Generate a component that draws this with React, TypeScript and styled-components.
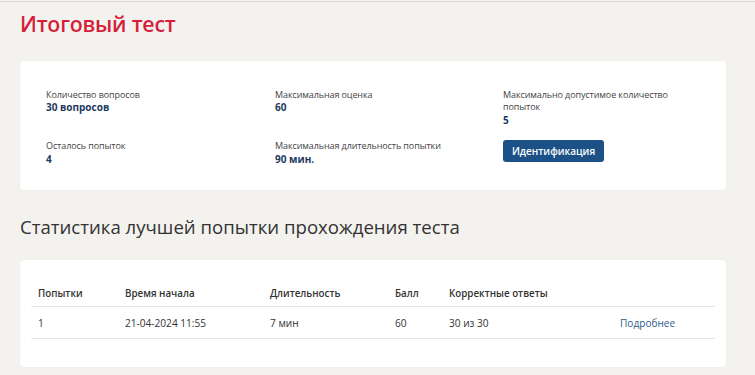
import styled, { createGlobalStyle } from "styled-components";

const GlobalStyle = createGlobalStyle`
  html, body {
    margin: 0;
    padding: 0;
    background: #f3f2ef;
  }
  body {
    font-family: "Open Sans", "Noto Sans", sans-serif;
    color: #333;
  }
`;

interface InfoItem {
  label: string;
  value: string;
  wrap?: boolean;
}

const infoRows: InfoItem[] = [
  { label: "Количество вопросов", value: "30 вопросов" },
  { label: "Максимальная оценка", value: "60" },
  { label: "Максимально допустимое количество попыток", value: "5", wrap: true },
  { label: "Осталось попыток", value: "4" },
  { label: "Максимальная длительность попытки", value: "90 мин." },
];

const columns = [
  { title: "Попытки", width: 87 },
  { title: "Время начала", width: 145 },
  { title: "Длительность", width: 125 },
  { title: "Балл", width: 54 },
  { title: "Корректные ответы", width: 171 },
  { title: "", width: 102 },
];

const attempts = [
  { n: "1", start: "21-04-2024 11:55", duration: "7 мин", score: "60", correct: "30 из 30" },
];

const App = () => {
  return (
    <>
      <GlobalStyle />
      <Page>
        <Title>Итоговый тест</Title>
        <Card $pad="28px 26px 24px">
          <InfoGrid>
            {infoRows.map((item) => (
              <InfoCell key={item.label}>
                <Label $wrap={item.wrap}>{item.label}</Label>
                <Value>{item.value}</Value>
              </InfoCell>
            ))}
            <InfoCell>
              <Button type="button">Идентификация</Button>
            </InfoCell>
          </InfoGrid>
        </Card>
        <Heading>Статистика лучшей попытки прохождения теста</Heading>
        <Card $pad="20px 11px 28px">
          <Table>
            <colgroup>
              {columns.map((c, i) => (
                <col key={i} style={{ width: c.width }} />
              ))}
            </colgroup>
            <thead>
              <tr>
                {columns.map((c, i) => (
                  <Th key={i}>{c.title}</Th>
                ))}
              </tr>
            </thead>
            <tbody>
              {attempts.map((a) => (
                <tr key={a.n}>
                  <Td>{a.n}</Td>
                  <Td>{a.start}</Td>
                  <Td>{a.duration}</Td>
                  <Td>{a.score}</Td>
                  <Td>{a.correct}</Td>
                  <Td>
                    <MoreLink href="#">Подробнее</MoreLink>
                  </Td>
                </tr>
              ))}
            </tbody>
          </Table>
        </Card>
      </Page>
    </>
  );
};

export default App;

const Page = styled.div`
  border-top: 1px solid #dcdad5;
  margin-top: 1px;
  padding: 0 29px 9px 20px;
`;

const Title = styled.h1`
  margin: 0;
  padding: 7px 0 0;
  height: 59px;
  box-sizing: border-box;
  font-size: 21.3px;
  line-height: 30px;
  font-weight: 600;
  color: #d51f3a;
  letter-spacing: -0.2px;
`;

const Card = styled.div<{ $pad: string }>`
  background: #fff;
  border-radius: 4px;
  box-shadow: 0 0 2px rgba(0, 0, 0, 0.06);
  padding: ${(p) => p.$pad};
`;

const InfoGrid = styled.div`
  display: grid;
  grid-template-columns: 229px 228px 1fr;
  row-gap: 13px;
`;

const InfoCell = styled.div`
  display: flex;
  flex-direction: column;
  align-items: flex-start;
`;

const Label = styled.div<{ $wrap?: boolean }>`
  max-width: ${(p) => (p.$wrap ? "165px" : "none")};
  white-space: ${(p) => (p.$wrap ? "normal" : "nowrap")};
  font-size: 9px;
  line-height: 12.4px;
  letter-spacing: -0.1px;
  color: #444;
`;

const Value = styled.div`
  font-size: 10px;
  line-height: 13.6px;
  font-weight: 700;
  color: #1e3a5f;
`;

const Button = styled.button`
  width: 101px;
  height: 22px;
  padding: 0;
  border: none;
  border-radius: 3px;
  background: #1c5187;
  color: #fff;
  font-family: "Open Sans", sans-serif;
  font-size: 10px;
  font-weight: 600;
  cursor: pointer;
`;

const Heading = styled.h2`
  margin: 0;
  padding: 24px 0 20px;
  font-size: 18.6px;
  line-height: 26px;
  font-weight: 400;
  color: #333;
`;

const Table = styled.table`
  width: 684px;
  border-collapse: collapse;
  table-layout: fixed;
`;

const Th = styled.th`
  height: 26px;
  padding: 0 0 0 7px;
  text-align: left;
  font-size: 9.8px;
  font-weight: 600;
  color: #333;
  border-bottom: 1px solid #e6e6e6;
`;

const Td = styled.td`
  height: 31px;
  padding: 0 0 0 7px;
  font-size: 10.1px;
  color: #333;
  border-bottom: 1px solid #e6e6e6;
`;

const MoreLink = styled.a`
  color: #2f5b8c;
  text-decoration: none;
`;
